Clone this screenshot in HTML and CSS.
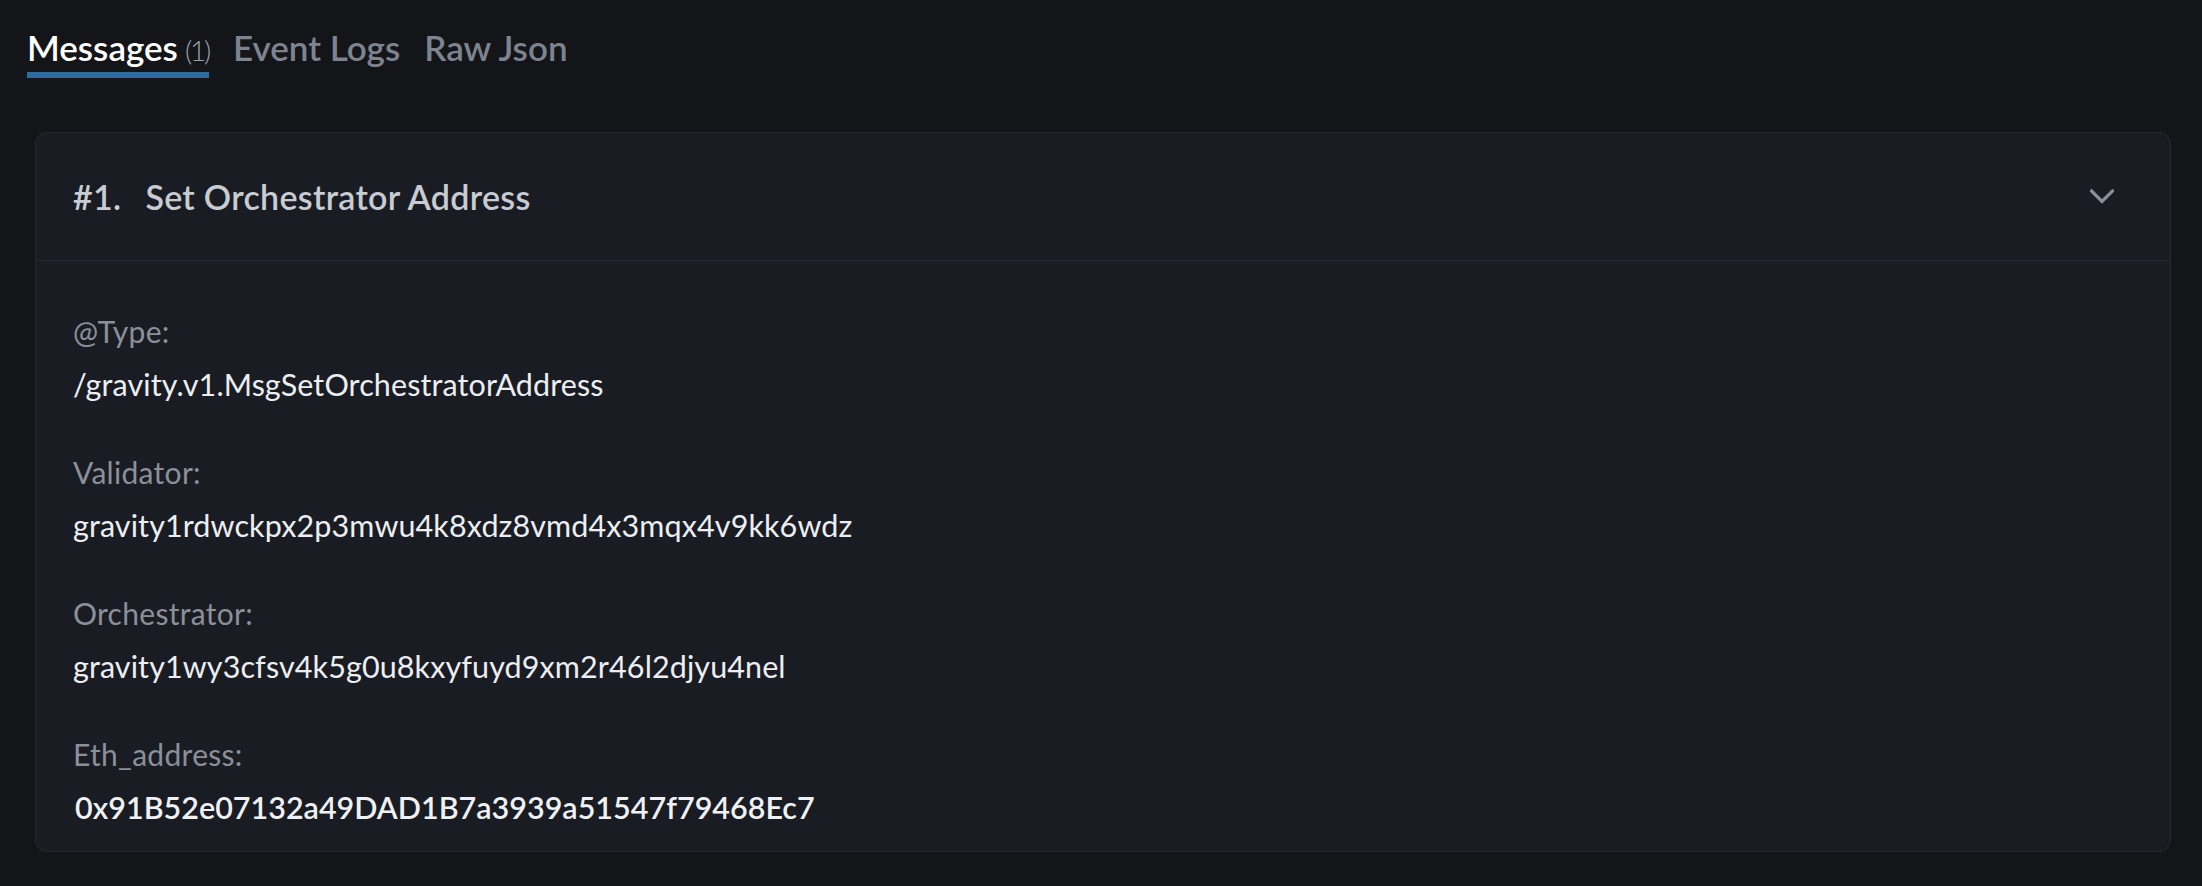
FILE: index.html
```html
<!DOCTYPE html>
<html lang="en">
<head>
<meta charset="utf-8">
<title>Messages</title>
<link rel="stylesheet" href="styles.css">
</head>
<body>
<div class="page">
  <nav class="tabs">
    <div class="tab active"><span class="tab-name">Messages</span><span class="tab-count">(1)</span></div>
    <div class="tab"><span class="tab-name">Event Logs</span></div>
    <div class="tab"><span class="tab-name">Raw Json</span></div>
  </nav>
  <section class="card">
    <header class="card-head">
      <div class="card-title"><span class="num">#1.</span><span class="title">Set Orchestrator Address</span></div>
      <svg class="chevron" width="24" height="16" viewBox="0 0 24 16" aria-hidden="true"><polyline points="1.5,2 12,12.5 22.5,2" fill="none" stroke="#8a909a" stroke-width="3.2" stroke-linecap="square"/></svg>
    </header>
    <div class="card-body">
      <div class="field">
        <div class="label">@Type:</div>
        <div class="value">/gravity.v1.MsgSetOrchestratorAddress</div>
      </div>
      <div class="field">
        <div class="label">Validator:</div>
        <div class="value">gravity1rdwckpx2p3mwu4k8xdz8vmd4x3mqx4v9kk6wdz</div>
      </div>
      <div class="field">
        <div class="label">Orchestrator:</div>
        <div class="value">gravity1wy3cfsv4k5g0u8kxyfuyd9xm2r46l2djyu4nel</div>
      </div>
      <div class="field">
        <div class="label">Eth_address:</div>
        <div class="value addr">0x91B52e07132a49DAD1B7a3939a51547f79468Ec7</div>
      </div>
    </div>
  </section>
</div>
</body>
</html>
```
FILE: styles.css
```css
html, body {
  margin: 0;
  padding: 0;
  background: #141519;
}
body {
  font-family: Lato, "Noto Sans", sans-serif;
  color: #eceef2;
}
.page {
  padding: 27px 31px 0 27px;
}
.tabs {
  display: flex;
  gap: 24px;
  align-items: flex-start;
}
.tab {
  display: flex;
  align-items: baseline;
  gap: 7px;
  padding-bottom: 5px;
  border-bottom: 6px solid transparent;
}
.tab.active {
  border-bottom-color: #2d6d9c;
}
.tab-name {
  font-size: 35px;
  line-height: 40px;
  font-weight: 600;
  color: #7d848f;
}
.tab.active .tab-name {
  color: #ffffff;
}
.tab-count {
  font-size: 28px;
  line-height: 28px;
  font-weight: 300;
  letter-spacing: -2.2px;
  color: #9aa0a8;
}
.card {
  margin-top: 54px;
  margin-left: 8px;
  background: #1a1c23;
  border: 1px solid #262932;
  border-radius: 12px;
}
.card-head {
  height: 127px;
  display: flex;
  align-items: center;
  justify-content: space-between;
  padding: 0 56px 0 37px;
  border-bottom: 1px solid #262932;
}
.card-title {
  display: flex;
  gap: 24px;
  font-size: 34px;
  line-height: 40px;
  font-weight: 600;
  letter-spacing: 0.3px;
  color: #c8cbd2;
}
.chevron {
  display: block;
}
.card-body {
  padding: 50px 37px 24px;
  display: flex;
  flex-direction: column;
  gap: 48px;
}
.field {
  display: flex;
  flex-direction: column;
  gap: 13px;
}
.label {
  font-size: 30px;
  line-height: 40px;
  letter-spacing: 0.3px;
  color: #8b9099;
}
.value {
  font-size: 30.5px;
  line-height: 40px;
  letter-spacing: 0.1px;
  color: #eceef2;
}
.value.addr {
  padding-left: 2px;
  font-weight: 600;
  font-size: 30.5px;
  letter-spacing: 0;
  color: #f0f1f4;
}
```
